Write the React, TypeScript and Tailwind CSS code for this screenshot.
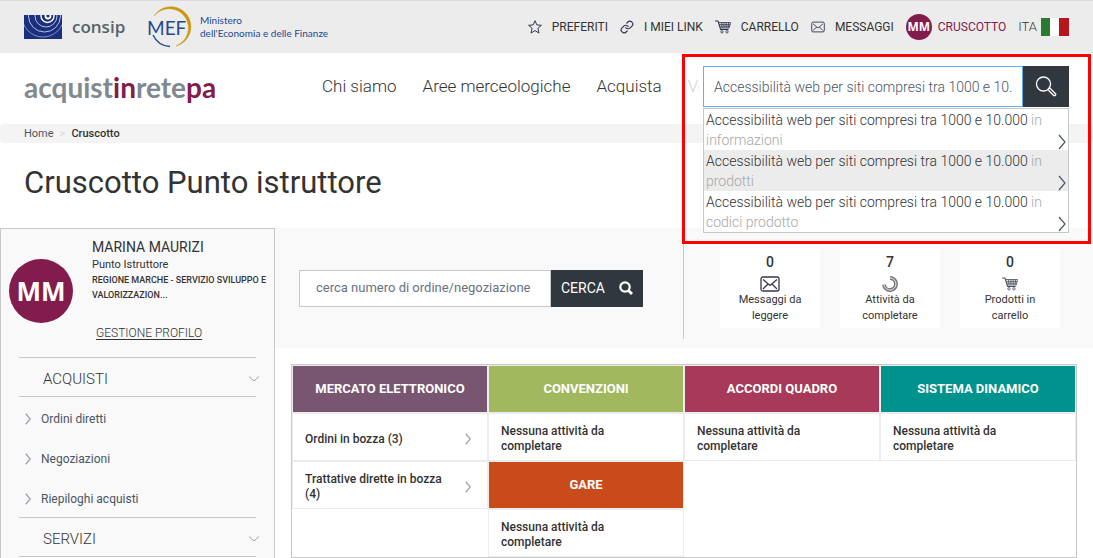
import React, { useState } from 'react';
import { Link as LinkIcon } from 'lucide-react';

type IconProps = { className?: string };

const CartIcon: React.FC<IconProps> = ({ className }) => (
    <svg viewBox="0 0 16 14" className={className} fill="none" stroke="currentColor" strokeWidth="0.8">
        <path d="M0 1h3l2.6 8.5h8" strokeWidth="1.1" />
        <path d="M3.6 2.5h12L14.2 8H5.2M4.2 4.4h11M4.8 6.2h10M6.5 2.5l.6 5.5M9 2.5V8M11.2 2.5V8M13.6 2.5L13 8" />
        <circle cx="7" cy="11.8" r="1.2" />
        <circle cx="12" cy="11.8" r="1.2" />
    </svg>
);

const MailIcon: React.FC<IconProps> = ({ className }) => (
    <svg viewBox="0 0 20 16" className={className} fill="none" stroke="currentColor" strokeWidth="1.3">
        <rect x="1" y="1" width="18" height="14" rx="2" />
        <path d="M3 3.5l7 6 7-6M3 13l5-5M17 13l-5-5" />
    </svg>
);

const StarIcon: React.FC<IconProps> = ({ className }) => (
    <svg viewBox="0 0 14 14" className={className} fill="none" stroke="currentColor" strokeWidth="1" strokeLinejoin="round">
        <path d="M7 .7l1.8 4.2 4.6.4-3.5 3 1.1 4.8L7 10.6l-4 2.5 1.1-4.8-3.5-3 4.6-.4z" />
    </svg>
);

const SpinnerIcon: React.FC<IconProps> = ({ className }) => (
    <svg viewBox="0 0 16 16" className={className} fill="none">
        <path d="M8 2A6 6 0 1 1 2 8.6" stroke="#777b80" strokeWidth="4" />
        <path d="M8 2A6 6 0 1 1 2 8.6" stroke="#e8e8ea" strokeWidth="1" />
    </svg>
);

const LensIcon: React.FC<IconProps> = ({ className }) => (
    <svg viewBox="0 0 22 22" className={className} fill="none" stroke="currentColor" strokeWidth="1.3">
        <circle cx="8.5" cy="8" r="7" />
        <path d="M13.4 13.2l1.3-1.3 5.8 5.8c.9.9-.9 2.7-1.8 1.8l-5.3-5.3" />
    </svg>
);

const BoldLensIcon: React.FC<IconProps> = ({ className }) => (
    <svg viewBox="0 0 14 14" className={className} fill="none" stroke="currentColor" strokeWidth="2.2">
        <circle cx="6" cy="6" r="4.7" />
        <path d="M9.4 9.4l3.6 3.6" strokeWidth="2.8" />
    </svg>
);

const Chevron: React.FC<IconProps> = ({ className }) => (
    <svg viewBox="0 0 8 16" preserveAspectRatio="none" className={className} fill="none" stroke="currentColor" strokeWidth="1.2">
        <path d="M1 1l6 7-6 7" vectorEffect="non-scaling-stroke" />
    </svg>
);

const ConsipLogo: React.FC = () => (
    <svg viewBox="0 0 38 24" className="w-[38px] h-6">
        <rect width="38" height="24" fill="#1b2f7c" />
        <g fill="none" stroke="#b4c0e4" strokeWidth="1">
            <circle cx="24" cy="1" r="2.5" stroke="#fff" strokeWidth="1.8" />
            <circle cx="23.5" cy="1" r="6.5" stroke="#fff" strokeWidth="1.4" />
            <circle cx="22" cy="1" r="11" />
            <circle cx="20.5" cy="1" r="16" />
            <circle cx="19" cy="1" r="21" stroke="#7d8fc8" />
        </g>
    </svg>
);

const MefLogo: React.FC = () => (
    <svg viewBox="0 0 48 42" className="w-12 h-[42px]">
        <path d="M8 10A20 20 0 1 1 30 40A19.3 19.3 0 1 0 8 10z" fill="#c8980f" stroke="#c8980f" strokeWidth="0.5" />
        <path d="M7 29A20 20 0 0 0 24 40.5" fill="none" stroke="#23498f" strokeWidth="1.4" />
        <text x="1" y="29" fontFamily="Lato, sans-serif" fontSize="19" fill="#23498f">MEF</text>
    </svg>
);

const topLinks = [
    { name: 'PREFERITI', icon: <StarIcon className="w-3.5 h-3.5" /> },
    { name: 'I MIEI LINK', icon: <LinkIcon size={14} strokeWidth={2} /> },
    { name: 'CARRELLO', icon: <CartIcon className="w-4 h-3.5" /> },
    { name: 'MESSAGGI', icon: <MailIcon className="w-3.5 h-3" /> },
];

const navLinks = ['Chi siamo', 'Aree merceologiche', 'Acquista'];

const suggestions = ['informazioni', 'prodotti', 'codici prodotto'];

const purchases = ['Ordini diretti', 'Negoziazioni', 'Riepiloghi acquisti'];

const counters = [
    { count: 0, label: 'Messaggi da leggere', icon: <MailIcon className="w-5 h-4 text-[#34364f]" /> },
    { count: 7, label: 'Attività da completare', icon: <SpinnerIcon className="w-4 h-4" /> },
    { count: 0, label: 'Prodotti in carrello', icon: <CartIcon className="w-4 h-3.5 text-[#4a4c60]" /> },
];

const BoardHead: React.FC<{ color: string; children: React.ReactNode }> = ({ color, children }) => (
    <h2 className={`h-12 border border-[#ececec] flex items-center justify-center text-[13px] font-bold text-white ${color}`}>
        {children}
    </h2>
);

const BoardLink: React.FC<{ children: React.ReactNode }> = ({ children }) => (
    <a href="#" className="h-12 border border-[#ececec] bg-white flex items-center justify-between pt-1 pl-3 pr-4 text-[12px] leading-[15px] font-medium">
        <span className="w-[144px]">{children}</span>
        <Chevron className="w-1.5 h-3 text-gray-400" />
    </a>
);

const BoardEmpty: React.FC = () => (
    <p className="h-12 border border-[#ececec] bg-white flex items-center pt-1 px-3 text-[12px] leading-[15px] font-medium">
        <span className="w-[120px]">Nessuna attività da completare</span>
    </p>
);

const MenuHeading: React.FC<{ children: React.ReactNode }> = ({ children }) => (
    <button className="w-full h-10 pt-1 border-y border-[#c8c8c8] flex items-center justify-between pl-6 text-[15px] font-light">
        {children}
        <svg viewBox="0 0 12 6" className="w-3 h-1.5 -mr-1 text-gray-400" fill="none" stroke="currentColor">
            <path d="M1 .5l5 4.5 5-4.5" />
        </svg>
    </button>
);

const SiteSearch: React.FC = () => {
    const [query, setQuery] = useState('Accessibilità web per siti compresi tra 1000 e 10.000');

    return (
        <div className="relative w-[366px] shrink-0">
            <form className="flex h-[41px]" onSubmit={(e) => e.preventDefault()}>
                <input
                    type="text"
                    aria-label="Cerca nel sito"
                    value={query}
                    onChange={(e) => setQuery(e.target.value)}
                    className="flex-1 min-w-0 px-2.5 border border-[#66afe9] bg-white text-sm font-light text-gray-600 outline-none"
                />
                <button aria-label="Cerca" className="w-[46px] bg-[#30373f] text-white flex items-center justify-center">
                    <LensIcon className="w-[22px] h-[22px]" />
                </button>
            </form>

            {/* Suggestions */}
            <ul className="absolute z-10 top-[42px] left-0 w-full border border-[#c8c8c8] bg-white text-sm leading-5 font-light">
                {suggestions.map((item, i) => (
                    <li key={item} className={i === 1 ? 'bg-[#ececec]' : ''}>
                        <a href="#" className="flex items-end justify-between h-[41px] px-0.5">
                            <span className="w-[350px]">
                                Accessibilità web per siti compresi tra 1000 e 10.000 <span className="text-[#a8a8a8]">in {item}</span>
                            </span>
                            <Chevron className="w-2 h-4 text-gray-600" />
                        </a>
                    </li>
                ))}
            </ul>

            {/* Highlight frame */}
            <div className="absolute z-20 -top-3 -left-[21px] w-[409px] h-[190px] border-3 border-[#ff0000] pointer-events-none" />
        </div>
    );
};

const Header: React.FC = () => (
    <header>
        <div className="h-[53px] bg-[#ececec] border-t border-[#dadae0] flex items-center justify-between px-6">
            <div className="flex items-center">
                <ConsipLogo />
                <span className="w-[54px] ml-2.5 font-['Open_Sans',sans-serif] text-[17px] font-semibold text-[#56636b]">consip</span>
                <span className="ml-5"><MefLogo /></span>
                <span className="ml-1.5 font-[Lato,sans-serif] text-[10px] leading-[13px] text-[#23498f]">
                    Ministero<br />dell'Economia e delle Finanze
                </span>
            </div>
            <nav className="flex items-center gap-3 text-[12px] whitespace-nowrap">
                {topLinks.map((link) => (
                    <a key={link.name} href="#" className="flex items-center gap-2.5 text-[#34364f]">
                        {link.icon}
                        <span className="text-[#333]">{link.name}</span>
                    </a>
                ))}
                <a href="#" className="flex items-center gap-1.5 text-[#821c4c]">
                    <span className="w-[26px] h-[26px] rounded-full bg-[#821c4c] text-white text-[12px] font-bold font-['Open_Sans',sans-serif] flex items-center justify-center">MM</span>
                    CRUSCOTTO
                </a>
                <a href="#" className="flex items-center gap-1 text-[13px] font-light">
                    ITA
                    <svg viewBox="0 0 28 18" className="w-7 h-[18px]">
                        <rect width="10" height="18" fill="#2b7a32" />
                        <rect x="9" width="10" height="18" fill="#fff" />
                        <rect x="18" width="10" height="18" fill="#b5151d" />
                    </svg>
                </a>
            </nav>
        </div>

        <div className="h-[71px] flex items-center px-6 pb-1">
            <a href="#" className="w-[194px] font-[Lato,sans-serif] text-[28px] leading-8 font-bold text-[#7f898f] [font-variant-ligatures:none]">
                acquist<span className="text-[#821c4c]">in</span>rete<span className="text-[#821c4c]">pa</span>
            </a>
            <nav className="flex-1 min-w-0 overflow-hidden ml-[104px] mr-1 flex gap-[26px] text-[17px] font-light whitespace-nowrap">
                {navLinks.map((name) => (
                    <a key={name} href="#">{name}</a>
                ))}
                <a href="#" className="text-gray-300">Vendi</a>
            </nav>
            <SiteSearch />
        </div>

        <nav className="h-[19px] pt-0.5 rounded-sm bg-[#f4f4f4] px-6 flex items-center gap-1.5 text-[11px]">
            <a href="#" className="text-gray-600">Home</a>
            <span className="text-gray-300">&gt;</span>
            <span className="font-medium">Cruscotto</span>
        </nav>
    </header>
);

const Sidebar: React.FC = () => (
    <aside className="w-[275px] shrink-0 border border-b-0 border-[#c8c8c8] bg-[#f9f9f9]">
        <div className="h-32 flex items-start pl-2 pt-2">
            <div className="mt-[22px] w-16 h-16 shrink-0 rounded-full bg-[#821c4c] text-white text-[26px] font-bold font-['Open_Sans',sans-serif] flex items-center justify-center">MM</div>
            <div className="ml-[19px]">
                <p className="text-sm leading-5">MARINA MAURIZI</p>
                <p className="text-[11px] leading-4">Punto Istruttore</p>
                <p className="text-[9px] leading-[15px] font-medium">REGIONE MARCHE - SERVIZIO SVILUPPO E VALORIZZAZION...</p>
                <a href="#" className="inline-block mt-5 ml-1 text-[12px] leading-5 font-light underline underline-offset-2">GESTIONE PROFILO</a>
            </div>
        </div>

        <div className="px-[18px]">
            <MenuHeading>ACQUISTI</MenuHeading>
            <ul className="pt-1 flex flex-col gap-1">
                {purchases.map((item) => (
                    <li key={item}>
                        <a href="#" className="h-9 flex items-center gap-2.5 pl-1.5 text-[12px] text-gray-600">
                            <Chevron className="w-1.5 h-3 text-gray-400" />
                            {item}
                        </a>
                    </li>
                ))}
            </ul>
            <MenuHeading>SERVIZI</MenuHeading>
        </div>
    </aside>
);

const Dashboard: React.FC = () => (
    <main className="flex-1 min-w-0">
        <section className="h-[120px] bg-[#f9f9f9] flex items-center">
            <form className="flex-1 flex h-[37px] px-6" onSubmit={(e) => e.preventDefault()}>
                <input
                    type="text"
                    aria-label="Numero di ordine o negoziazione"
                    placeholder="cerca numero di ordine/negoziazione"
                    className="w-[252px] pl-4 border border-[#c8c8c8] bg-white text-[13px] outline-none placeholder:text-gray-500"
                />
                <button className="w-[92px] bg-[#30373f] text-white text-sm flex items-center justify-between px-2.5">
                    CERCA
                    <BoldLensIcon className="w-3.5 h-3.5" />
                </button>
            </form>
            <ul className="w-[410px] h-[102px] pl-9 border-l border-[#c8c8c8] flex items-center gap-5">
                {counters.map((item) => (
                    <li key={item.label} className="w-[100px] h-20 bg-white flex flex-col items-center text-center">
                        <span className="h-7 text-sm leading-7 font-medium">{item.count}</span>
                        <span className="h-4 flex items-center">{item.icon}</span>
                        <span className="w-[72px] text-[11px] leading-4">{item.label}</span>
                    </li>
                ))}
            </ul>
        </section>

        {/* Activity board */}
        <section className="m-4 mb-0 grid grid-cols-4 border border-[#c8cac9]">
            <div>
                <BoardHead color="bg-[#785671]">MERCATO ELETTRONICO</BoardHead>
                <BoardLink>Ordini in bozza (3)</BoardLink>
                <BoardLink>Trattative dirette in bozza (4)</BoardLink>
            </div>
            <div>
                <BoardHead color="bg-[#a1b85f]">CONVENZIONI</BoardHead>
                <BoardEmpty />
                <BoardHead color="bg-[#c94a1a]">GARE</BoardHead>
                <BoardEmpty />
            </div>
            <div>
                <BoardHead color="bg-[#a63a58]">ACCORDI QUADRO</BoardHead>
                <BoardEmpty />
            </div>
            <div>
                <BoardHead color="bg-[#00928d]">SISTEMA DINAMICO</BoardHead>
                <BoardEmpty />
            </div>
        </section>
    </main>
);

const App: React.FC = () => {
    return (
        <div className="min-h-screen flex flex-col bg-white text-[#333] font-[Roboto,sans-serif]">
            <Header />
            <h1 className="h-[85px] px-6 pb-1 flex items-center text-[31px]">Cruscotto Punto istruttore</h1>
            <div className="flex-1 flex">
                <Sidebar />
                <Dashboard />
            </div>
        </div>
    );
};

export default App;
